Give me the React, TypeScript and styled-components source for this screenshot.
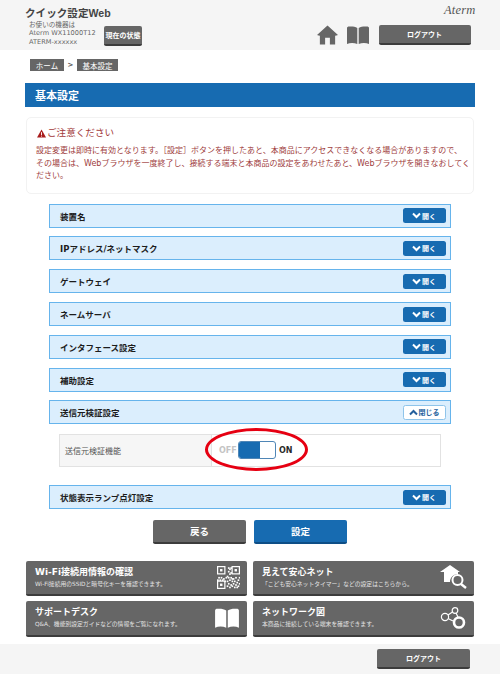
import styled, { createGlobalStyle } from "styled-components";

const FONT = `"DejaVu Sans", "Noto Sans CJK JP", sans-serif`;

const GlobalStyle = createGlobalStyle`
  html, body {
    margin: 0;
    padding: 0;
    background: #fff;
    font-family: ${FONT};
  }
  * {
    box-sizing: border-box;
  }
`;

const Page = styled.div`
  width: 500px;
  height: 674px;
  overflow: hidden;
  display: flex;
  flex-direction: column;
`;

const Header = styled.header`
  height: 50px;
  background: #f5f5f5;
  padding: 6px 29.5px 0 25px;
  display: flex;
  justify-content: space-between;
`;

const Brand = styled.div`
  display: flex;
  flex-direction: column;
`;

const SiteTitle = styled.div`
  font-family: "Liberation Sans", "Noto Sans CJK JP", sans-serif;
  font-size: 10.6px;
  line-height: 14px;
  font-weight: 700;
  color: #444;
`;

const DeviceRow = styled.div`
  display: flex;
  align-items: flex-end;
  gap: 7px;
  padding-left: 4px;
`;

const DeviceInfo = styled.div`
  font-size: 6.6px;
  line-height: 8.4px;
  color: #666;
  white-space: nowrap;
  width: 68px;
  padding-top: 1px;
`;

const HeaderRight = styled.div`
  display: flex;
  flex-direction: column;
  align-items: flex-end;
`;

const Logo = styled.div`
  font-family: "Liberation Serif", serif;
  font-style: italic;
  font-size: 12.5px;
  line-height: 11px;
  color: #555;
  margin-right: -5px;
  margin-top: -1px;
  letter-spacing: 0.2px;
`;

const HeaderTools = styled.div`
  display: flex;
  align-items: center;
  margin-top: 9px;
`;

const ToolGap = styled.span`
  width: 9px;
`;

const GrayButton = styled.div<{ $w: number; $h: number; $size: number }>`
  width: ${({ $w }) => $w}px;
  height: ${({ $h }) => $h}px;
  background: #666;
  border-radius: 2px;
  border-bottom: 2px solid #3c3c3c;
  color: #fff;
  font-size: ${({ $size }) => $size}px;
  font-weight: 700;
  display: flex;
  align-items: center;
  justify-content: center;
  white-space: nowrap;
`;

const Main = styled.main`
  flex: 1;
  display: flex;
  flex-direction: column;
  padding: 9px 25px 0;
`;

const Breadcrumb = styled.nav`
  display: flex;
  align-items: center;
  padding-left: 5px;
  height: 12px;
`;

const Crumb = styled.span<{ $w: number }>`
  width: ${({ $w }) => $w}px;
  height: 12px;
  background: #666;
  color: #fff;
  font-size: 7.5px;
  display: flex;
  align-items: center;
  justify-content: center;
`;

const CrumbSep = styled.span`
  width: 13px;
  text-align: center;
  font-size: 7px;
  font-weight: 700;
  color: #555;
`;

const PageTitle = styled.h1`
  margin: 12px 0 0;
  width: 450px;
  height: 24px;
  background: #176bb1;
  color: #fff;
  font-size: 11px;
  font-weight: 700;
  display: flex;
  align-items: center;
  padding-left: 10px;
`;

const Notice = styled.section`
  margin: 10px 1px 0;
  height: 77px;
  border: 1px solid #f2f2f2;
  border-radius: 5px;
  padding: 8px 0 0 9px;
  color: #a33a3a;
`;

const NoticeHead = styled.div`
  display: flex;
  align-items: center;
  gap: 1px;
  font-size: 9.6px;
  line-height: 14px;
  padding-left: 1px;
`;

const NoticeBody = styled.p`
  margin: 5px 0 0;
  font-size: 8px;
  line-height: 12.5px;
  color: #a04040;
`;

const Accordions = styled.div`
  display: flex;
  flex-direction: column;
  margin-top: 9.7px;
  padding: 0 24px;
`;

const AccordionRow = styled.div<{ $gap?: number }>`
  height: 24px;
  flex-shrink: 0;
  margin-bottom: ${({ $gap = 8.8 }) => $gap}px;
  background: #dbeefd;
  border: 1.5px solid #66b4ec;
  display: flex;
  align-items: center;
  justify-content: space-between;
  padding: 0 4.5px 0 10px;
  font-size: 8.5px;
  font-weight: 700;
  color: #1c1c1c;
`;

const ToggleButton = styled.div<{ $open?: boolean }>`
  width: 43px;
  height: 15px;
  border-radius: 2.5px;
  background: ${({ $open }) => ($open ? "#fff" : "#176bb1")};
  border: ${({ $open }) => ($open ? "1px solid #8fc4ea" : "none")};
  color: ${({ $open }) => ($open ? "#245f9c" : "#fff")};
  font-size: 7px;
  font-weight: 700;
  display: flex;
  align-items: center;
  justify-content: center;
  gap: 1px;
`;

const SettingTable = styled.div`
  display: flex;
  height: 33.5px;
  flex-shrink: 0;
  margin: 0 10px 18.2px;
  border: 1px solid #e2e2e2;
`;

const SettingLabel = styled.div`
  width: 152px;
  background: #f6f6f6;
  border-right: 1px solid #e2e2e2;
  display: flex;
  align-items: center;
  padding-left: 5px;
  font-size: 8px;
  color: #555;
`;

const SettingValue = styled.div`
  flex: 1;
  position: relative;
  display: flex;
  align-items: center;
  padding-left: 7px;
  font-size: 8px;
  font-weight: 700;
`;

const OffLabel = styled.span`
  color: #c4c4c4;
  width: 19px;
`;

const OnLabel = styled.span`
  color: #2a2a2a;
  margin-left: 3px;
`;

const Switch = styled.div`
  width: 38px;
  height: 18px;
  border: 1px solid #4f86b6;
  border-radius: 3px;
  overflow: hidden;
  display: flex;
  background: #fff;
`;

const SwitchFill = styled.div`
  width: 21px;
  background: #176bb1;
`;

const Highlight = styled.div`
  position: absolute;
  left: -7px;
  top: -7px;
  width: 103px;
  height: 43px;
  border: 3px solid #e60012;
  border-radius: 50%;
`;

const FormButtons = styled.div`
  display: flex;
  justify-content: center;
  gap: 8px;
  margin-top: 2.2px;
`;

const FormButton = styled.div<{ $primary?: boolean }>`
  width: 93px;
  height: 23.6px;
  border-radius: 2px;
  background: ${({ $primary }) => ($primary ? "#176bb1" : "#666")};
  border-bottom: 2px solid ${({ $primary }) => ($primary ? "#0e4e86" : "#3c3c3c")};
  color: #fff;
  font-size: 9.5px;
  font-weight: 700;
  display: flex;
  align-items: center;
  justify-content: center;
`;

const CardGrid = styled.div`
  display: grid;
  grid-template-columns: 220.5px 221px;
  grid-auto-rows: 35.5px;
  column-gap: 6.5px;
  row-gap: 5px;
  margin: 16.7px 1px 0;
`;

const Card = styled.div`
  background: #666;
  border-radius: 2px;
  border-bottom: 2px solid #3c3c3c;
  color: #fff;
  display: flex;
  align-items: center;
  justify-content: space-between;
  padding: 0 7px 0 9px;
`;

const CardText = styled.div`
  display: flex;
  flex-direction: column;
`;

const CardTitle = styled.div`
  font-size: 9px;
  line-height: 13px;
  font-weight: 700;
`;

const CardNote = styled.div`
  font-size: 5.8px;
  line-height: 10px;
  color: #e4e4e4;
  white-space: nowrap;
`;

const Footer = styled.footer`
  height: 30px;
  background: #f5f5f5;
  display: flex;
  justify-content: flex-end;
  align-items: center;
  padding-right: 30px;
`;

const HomeSvg = styled.svg`
  margin-right: 8px;
`;

const HomeIcon = () => (
  <HomeSvg width="21" height="20" viewBox="0 0 22 20">
    <path fill="#666" d="M11 0 L22 10 L19.5 10.8 L19 10.5 V20 H13.5 V13 H8.5 V20 H3 V10.5 L2.5 10.8 L0 10 Z" />
  </HomeSvg>
);

const BookIcon = ({ w, h, color }: { w: number; h: number; color: string }) => (
  <svg width={w} height={h} viewBox="0 0 24 18">
    <path fill={color} d="M1 2 C1 1 2 0.5 3 0.5 C6 0.2 9 0.5 11.3 2 V18 C8 16.5 4 16.5 1 18 Z" />
    <path fill={color} d="M23 2 C23 1 22 0.5 21 0.5 C18 0.2 15 0.5 12.7 2 V18 C16 16.5 20 16.5 23 18 Z" />
  </svg>
);

const WarnIcon = () => (
  <svg width="9" height="9" viewBox="0 0 10 10">
    <path fill="#a81c1c" d="M5 0.5 L10 9.5 H0 Z" />
    <rect x="4.5" y="3.5" width="1" height="3.2" fill="#fff" />
    <rect x="4.5" y="7.4" width="1" height="1" fill="#fff" />
  </svg>
);

const Chevron = ({ up, color }: { up?: boolean; color: string }) => (
  <svg width="9" height="7" viewBox="0 0 9 7">
    <path
      d={up ? "M1 5.5 L4.5 2 L8 5.5" : "M1 1.5 L4.5 5 L8 1.5"}
      fill="none"
      stroke={color}
      strokeWidth="2"
    />
  </svg>
);

const QR_CELLS = [
  [9, 1], [10, 2], [11, 1], [9, 4], [11, 5], [10, 6],
  [1, 9], [3, 9], [5, 10], [7, 9], [2, 11], [6, 12],
  [9, 9], [11, 9], [13, 10], [15, 9], [17, 11], [10, 11], [12, 12], [14, 12],
  [16, 13], [9, 14], [11, 15], [13, 14], [15, 15], [17, 16], [10, 17], [14, 17],
  [12, 16], [16, 17], [8, 8], [18, 9], [8, 12], [8, 16], [18, 14], [12, 10], [4, 11], [0, 11],
];

const QrIcon = () => (
  <svg width="23" height="23" viewBox="0 0 19 19">
    <g fill="none" stroke="#fff" strokeWidth="1">
      <rect x="0.5" y="0.5" width="6" height="6" />
      <rect x="12.5" y="0.5" width="6" height="6" />
      <rect x="0.5" y="12.5" width="6" height="6" />
    </g>
    <g fill="#fff">
      <rect x="2.5" y="2.5" width="2" height="2" />
      <rect x="14.5" y="2.5" width="2" height="2" />
      <rect x="2.5" y="14.5" width="2" height="2" />
      {QR_CELLS.map(([x, y]) => (
        <rect key={`${x}-${y}`} x={x} y={y} width="1.4" height="1.4" />
      ))}
    </g>
  </svg>
);

const SafeNetIcon = () => (
  <svg width="27" height="24" viewBox="0 0 27 24">
    <path fill="#fff" d="M10 0 L20 7 H18 V9 C13 9 10 13 10 17 H4 V7 H0 Z" />
    <circle cx="17.5" cy="15" r="5" fill="#666" stroke="#fff" strokeWidth="2" />
    <path d="M21 19 L26 23" stroke="#fff" strokeWidth="2.4" />
  </svg>
);

const NetworkIcon = () => (
  <svg width="27" height="22" viewBox="0 0 27 22">
    <g stroke="#fff" fill="none">
      <path d="M8 8 L12.5 5 M8 11.5 L13 14 M16 6 L18 10" strokeWidth="1.2" />
      <circle cx="5" cy="10" r="3.6" strokeWidth="1.2" />
      <circle cx="15" cy="3.5" r="2.8" strokeWidth="1.2" />
      <circle cx="19" cy="15.5" r="5" strokeWidth="2.6" />
    </g>
  </svg>
);

const SECTIONS_BEFORE = [
  "装置名",
  "IPアドレス/ネットマスク",
  "ゲートウェイ",
  "ネームサーバ",
  "インタフェース設定",
  "補助設定",
];

const CARDS = [
  { title: "Wi-Fi接続用情報の確認", note: "Wi-Fi接続用のSSIDと暗号化キーを確認できます。", icon: <QrIcon /> },
  { title: "見えて安心ネット", note: "「こども安心ネットタイマー」などの設定はこちらから。", icon: <SafeNetIcon /> },
  { title: "サポートデスク", note: "Q&A、機能別設定ガイドなどの情報をご覧になれます。", icon: <BookIcon w={26} h={20} color="#fff" /> },
  { title: "ネットワーク図", note: "本商品に接続している端末を確認できます。", icon: <NetworkIcon /> },
];

const OpenButton = () => (
  <ToggleButton>
    <Chevron color="#fff" />
    開く
  </ToggleButton>
);

export default function App() {
  return (
    <Page>
      <GlobalStyle />
      <Header>
        <Brand>
          <SiteTitle>クイック設定Web</SiteTitle>
          <DeviceRow>
            <DeviceInfo>
              お使いの機器は
              <br />
              Aterm WX11000T12
              <br />
              ATERM-xxxxxx
            </DeviceInfo>
            <GrayButton $w={38} $h={20} $size={7}>現在の状態</GrayButton>
          </DeviceRow>
        </Brand>
        <HeaderRight>
          <Logo>Aterm</Logo>
          <HeaderTools>
            <HomeIcon />
            <BookIcon w={24} h={18} color="#666" />
            <ToolGap />
            <GrayButton $w={92} $h={20} $size={7}>ログアウト</GrayButton>
          </HeaderTools>
        </HeaderRight>
      </Header>

      <Main>
        <Breadcrumb>
          <Crumb $w={34}>ホーム</Crumb>
          <CrumbSep>&gt;</CrumbSep>
          <Crumb $w={41}>基本設定</Crumb>
        </Breadcrumb>
        <PageTitle>基本設定</PageTitle>

        <Notice>
          <NoticeHead>
            <WarnIcon />
            ご注意ください
          </NoticeHead>
          <NoticeBody>
            設定変更は即時に有効となります。［設定］ボタンを押したあと、本商品にアクセスできなくなる場合がありますので、
            <br />
            その場合は、Webブラウザを一度終了し、接続する端末と本商品の設定をあわせたあと、Webブラウザを開きなおしてく
            <br />
            ださい。
          </NoticeBody>
        </Notice>

        <Accordions>
          {SECTIONS_BEFORE.map((name) => (
            <AccordionRow key={name}>
              {name}
              <OpenButton />
            </AccordionRow>
          ))}
          <AccordionRow $gap={9.2}>
            送信元検証設定
            <ToggleButton $open>
              <Chevron up color="#245f9c" />
              閉じる
            </ToggleButton>
          </AccordionRow>
          <SettingTable>
            <SettingLabel>送信元検証機能</SettingLabel>
            <SettingValue>
              <OffLabel>OFF</OffLabel>
              <Switch>
                <SwitchFill />
              </Switch>
              <OnLabel>ON</OnLabel>
              <Highlight />
            </SettingValue>
          </SettingTable>
          <AccordionRow>
            状態表示ランプ点灯設定
            <OpenButton />
          </AccordionRow>
        </Accordions>

        <FormButtons>
          <FormButton>戻る</FormButton>
          <FormButton $primary>設定</FormButton>
        </FormButtons>

        <CardGrid>
          {CARDS.map((card) => (
            <Card key={card.title}>
              <CardText>
                <CardTitle>{card.title}</CardTitle>
                <CardNote>{card.note}</CardNote>
              </CardText>
              {card.icon}
            </Card>
          ))}
        </CardGrid>
      </Main>

      <Footer>
        <GrayButton $w={93} $h={20} $size={7}>ログアウト</GrayButton>
      </Footer>
    </Page>
  );
}
